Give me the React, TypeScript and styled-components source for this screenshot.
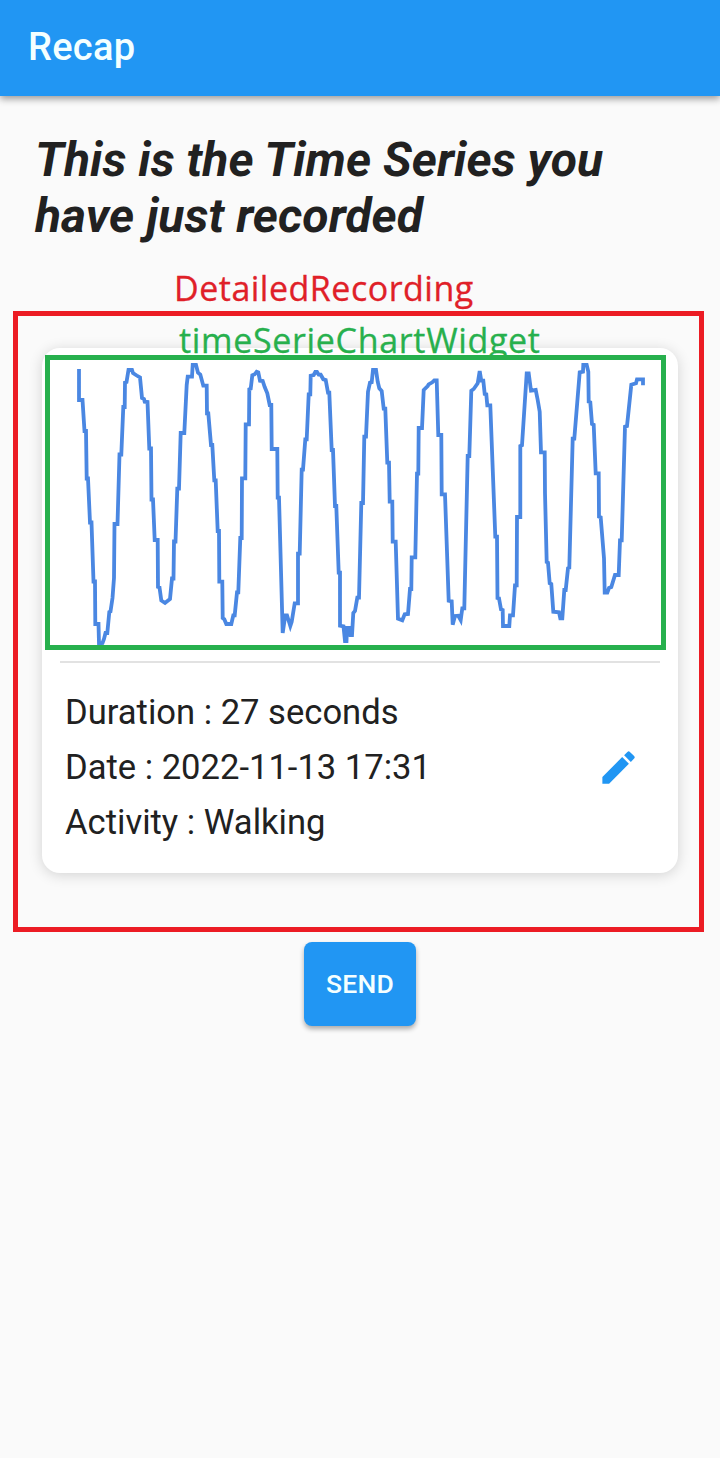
import React from "react";
import styled, { createGlobalStyle } from "styled-components";

const GlobalStyle = createGlobalStyle`
  * { box-sizing: border-box; }
  body { margin: 0; background: #fafafa; color: #212121; font-family: Roboto, sans-serif; }
`;

const Screen = styled.div`
  display: flex;
  flex-direction: column;
  align-items: flex-start;
  width: 720px;
  height: 1458px;
  overflow: hidden;
  background: #fafafa;
`;

const AppBar = styled.header`
  display: flex;
  align-items: center;
  flex: none;
  width: 100%;
  height: 96px;
  padding: 0 28px 2px;
  background: #2196f3;
  box-shadow: 0 3px 7px rgba(0, 0, 0, 0.38);
`;

const AppTitle = styled.h1`
  margin: 0;
  color: #f4ffff;
  font-size: 38px;
  line-height: 44px;
  font-weight: 500;
  letter-spacing: 0.3px;
`;

const Heading = styled.h2`
  flex: none;
  margin: 36px 0 0 35px;
  width: 620px;
  font-size: 48px;
  line-height: 56px;
  font-weight: 700;
  font-style: italic;
  letter-spacing: 0.06px;
`;

const Label = styled.div<{ $color: string; $spacing: number }>`
  color: ${(p) => p.$color};
  font-family: "Open Sans", sans-serif;
  font-size: 34px;
  line-height: 46px;
  letter-spacing: ${(p) => p.$spacing}px;
  white-space: nowrap;
  -webkit-text-stroke: 0.3px currentColor;
`;

const OuterLabel = styled(Label)`
  flex: none;
  height: 46px;
  margin: 21px 0 0 174px;
`;

const OuterFrame = styled.section`
  flex: none;
  width: 691px;
  height: 621px;
  margin: 0 0 0 13px;
  padding: 32px 21px 0 24px;
  border: 5px solid #ec1c24;
`;

const Card = styled.article`
  position: relative;
  display: flex;
  flex-direction: column;
  width: 636px;
  height: 525px;
  padding: 7px 3px 0;
  border-radius: 18px;
  background: #fff;
  box-shadow: 0 2px 14px rgba(0, 0, 0, 0.16);
`;

const InnerLabel = styled(Label)`
  position: absolute;
  left: 137px;
  top: -31px;
`;

const ChartFrame = styled.div`
  position: relative;
  flex: none;
  width: 621px;
  height: 295px;
  border: 5px solid #27b04d;
  background: #fff;
`;

const Chart = styled.svg`
  display: block;
  width: 611px;
  height: 285px;
`;

const Divider = styled.hr`
  flex: none;
  width: 600px;
  height: 2px;
  margin: 11px 0 0 15px;
  border: 0;
  background: #e2e2e2;
`;

const Details = styled.div`
  display: flex;
  align-items: center;
  justify-content: space-between;
  margin-top: 22px;
  padding: 0 35px 0 20px;
`;

const DetailList = styled.div`
  display: flex;
  flex-direction: column;
`;

const Detail = styled.div`
  font-size: 34.6px;
  line-height: 55px;
  white-space: nowrap;
`;

const EditIcon = styled.svg`
  display: block;
  width: 43px;
  height: 43px;
  fill: #2196f3;
`;

const SendButton = styled.button`
  align-self: center;
  flex: none;
  width: 112px;
  height: 84px;
  margin-top: 10px;
  padding: 0;
  border: 0;
  border-radius: 8px;
  background: #2196f3;
  color: #f4ffff;
  font: 500 26.5px/30px Roboto, sans-serif;
  letter-spacing: 0.2px;
  box-shadow: 0 3px 5px rgba(0, 0, 0, 0.32);
`;

const series = `
79,369 79,400 82.5,400 84.5,431 86,431 86.7,478.5 88,478.5 90,522.5 91.5,522.5 93.5,581.5
95,581.5 95.3,624 98.5,624 99,643.5 102.5,643 104,639 105.5,633 107.3,633 109.3,612 110.5,611.5
112.5,598 114,578 114.5,524 117.5,524 119.5,454.5 121.3,454.5 123.3,407 124.7,407 125,382.5
126.5,382 128.5,370 132,370 133,373 136.7,375.5 140,377.5 142,398 144,399 144.7,401.7 147.5,402
149.3,448.5 151,448.5 151.5,499.5 153,499.5 154.7,540 157.7,540 158,587 159.5,587.5 161.3,600.5
165,603 170,599 172,578.5 173.5,578.5 174,541.5 175.5,541.5 177.3,488.7 179,488.7 180.7,433
184.3,433 186.7,385 187.7,376.7 192,376.7 192.7,365 196,365 198,372.7 200.3,374.5 203.3,385.7
206.7,385.7 207,413.3 208.3,413.3 211,445 212.3,445 214.3,480.3 215.7,480.3 217.7,531 219,531
219.3,581.7 222.3,581.7 222.7,618 224.3,619.3 226.3,624 231.3,624 233.3,615.3 234.7,615.3
237,592.3 238.3,592.3 240.3,538 241.7,538 242,478.3 245.3,478.3 245.7,424.3 249,424.3 249.3,389.3
250.7,388.7 252.3,375.3 254.7,374.3 256.7,371.7 258.3,372.3 260,380.7 262.7,381 264.7,387
267.3,393.3 269.7,405 271.3,405 271.7,449 277.3,449 277.7,497.7 279,497.7 282.7,633 285.3,615.3
287,615.3 290.3,626 291.7,621.7 294.7,603.3 298,603.3 298,553.7 299.7,553.7 301.7,469.7 303,469.7
305.3,439.3 306.7,439.3 308.7,394.3 310.3,394.3 310.7,375.7 313.7,375 315.3,372 317,372
318.7,374.7 320.7,374.7 323.3,379.3 325.7,380 328,392.7 329.3,392.7 331.7,450 333,450 335,506
336.3,506 338.7,572.7 340,572.7 340,625.7 343.5,626.3 345,641 346.5,641 347,628 350,628 350.5,635
352,635 353.3,613 355,611 357.3,597.7 359,597.7 361.3,503 363,503 364.3,436.7 366,436.7 368,391.7
370,382.7 371.7,382.3 373,370 376,370 377.7,381.7 379.3,388.3 381.7,391 383.7,408.7 385.3,408.7
387.3,462.7 389,462.7 389.7,501.7 392.3,501.7 392.7,541.7 395.7,541.7 398,618.7 402.3,620.3
404.7,614.3 408,614 410,589 411.3,589 411.7,557.3 415.3,557.3 417,473.7 418.3,473.7 418.7,428
422,428 423.7,390 427.7,386 428.7,384.3 432.3,382.3 434.3,380.3 436.7,380.3 438.3,435 441.3,435
441.7,494.3 445,494.3 448.7,600.7 451.7,601.3 452.7,624.7 455,616 458.3,615.7 460.7,620
462.3,608.3 464.3,608.3 467.7,456 469.3,456 471.3,390.7 473.7,389 477.7,383.3 479.7,371
481.3,380.7 483.3,380.7 484.7,394 486.3,394.3 487.3,405.3 490.3,405.3 495.3,536.7 497,536.7
497.5,598 499,598.3 501,609.3 502.7,610 503,626 509.3,626 510,615.3 513,615.3 515,585.3
516.7,585.3 517,517 520.3,517 520.3,446 522,445.3 524.3,410 526.7,373.3 528.7,373.3 531,390.7
535.7,390 537.7,400 539.7,411.7 541,452.3 544.7,452.3 545,493.3 546.7,562 548,562.7 549.7,583.3
551.3,584 553.3,611.7 559,612.3 560.3,618.3 562.3,618.3 564.3,590 565.7,590 568,568.3 569.3,567.7
572.7,438.7 574.3,438.7 579.7,372.3 583,371.7 583.3,365 586.7,365 588.3,371.7 588.7,401.7
590.3,402.3 592,424 593.7,424.7 595.7,473.3 598.7,473.3 599,516.7 600.7,517.3 604,558.3
604.7,592.7 607.3,592.7 609,588 611.3,587 615,575 618.7,575 620,540.3 621.7,540.3 625,426.7
627,426 631.3,384.7 636,383.3 637,379.3 643,379.3 643,385.3`;

const details = ["Duration : 27 seconds", "Date : 2022-11-13 17:31", "Activity : Walking"];

export default function App() {
  return (
    <Screen>
      <GlobalStyle />
      <AppBar>
        <AppTitle>Recap</AppTitle>
      </AppBar>
      <Heading>
        This is the Time Series you
        <br />
        have just recorded
      </Heading>
      <OuterLabel $color="#e02028" $spacing={0.5}>
        DetailedRecording
      </OuterLabel>
      <OuterFrame>
        <Card>
          <InnerLabel $color="#27b04d" $spacing={0.67}>
            timeSerieChartWidget
          </InnerLabel>
          <ChartFrame>
            <Chart viewBox="50 360 611 285">
              <polyline points={series} fill="none" stroke="#4a87e2" strokeWidth="3.8" />
            </Chart>
          </ChartFrame>
          <Divider />
          <Details>
            <DetailList>
              {details.map((text) => (
                <Detail key={text}>{text}</Detail>
              ))}
            </DetailList>
            <EditIcon viewBox="0 0 24 24">
              <path d="M3 17.25V21h3.75L17.81 9.94l-3.75-3.75L3 17.25zM20.71 7.04a1 1 0 0 0 0-1.41l-2.34-2.34a1 1 0 0 0-1.41 0l-1.83 1.83 3.75 3.75 1.83-1.83z" />
            </EditIcon>
          </Details>
        </Card>
      </OuterFrame>
      <SendButton>SEND</SendButton>
    </Screen>
  );
}
